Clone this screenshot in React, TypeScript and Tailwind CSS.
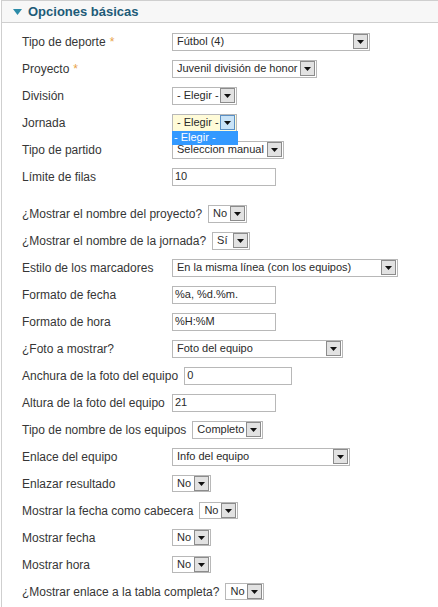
import React from "react";

const font = { fontFamily: '"Liberation Sans", Arial, sans-serif' };

function Arrow({ active }: { active?: boolean }) {
  return (
    <span
      className={`ml-auto mr-[1px] flex h-[15px] w-[15px] shrink-0 items-center justify-center border ${
        active ? "border-[#5a8fc4] bg-[#c9e3f7]" : "border-[#8c8c8c] bg-[#e2e2e2]"
      }`}
    >
      <svg width="7" height="4" viewBox="0 0 7 4">
        <path d="M0 0h7L3.5 4z" fill="#111" />
      </svg>
    </span>
  );
}

function Select({
  value,
  w,
  h = "h-[18px]",
  active,
}: {
  value: string;
  w: string;
  h?: string;
  active?: boolean;
}) {
  return (
    <div
      className={`flex shrink-0 items-center border border-[#b8b8b8] ${h} ${w} ${
        active ? "bg-[#fffbd8]" : "bg-white"
      }`}
    >
      <span className="whitespace-nowrap pl-[4px] text-[11px] leading-none text-[#2a2a2a]">
        {value}
      </span>
      <Arrow active={active} />
    </div>
  );
}

function Input({ value, w }: { value: string; w: string }) {
  return (
    <div
      className={`flex h-[18px] shrink-0 items-center border border-[#b8b8b8] bg-white pl-[2px] text-[11px] leading-none text-[#2a2a2a] ${w}`}
    >
      {value}
    </div>
  );
}

function Row({
  label,
  req,
  children,
}: {
  label: string;
  req?: boolean;
  children: React.ReactNode;
}) {
  return (
    <div className="relative flex h-[27px] items-center">
      <span className="min-w-[150px] whitespace-nowrap pr-[6px] text-[12px] text-[#363636]">
        {label}
        {req && <span className="ml-[4px] text-[#e8a34a]">*</span>}
      </span>
      {children}
    </div>
  );
}

export default function App() {
  return (
    <div className="min-h-[607px] w-[438px] bg-white" style={font}>
      <div className="ml-[1px] min-h-[607px] border-l border-[#cfcfcf]">
        <div className="flex h-[23px] items-center border-y border-[#cfcfcf] bg-[#f7f7f7]">
          <svg width="9" height="6" viewBox="0 0 9 6" className="ml-[11px]">
            <path d="M0 0h9L4.5 6z" fill="#2b8ba8" />
          </svg>
          <span className="ml-[6px] text-[13px] font-bold text-[#1d5b78]">
            Opciones básicas
          </span>
        </div>

        <div className="pl-[20px] pt-[5px]">
          <Row label="Tipo de deporte" req>
            <Select value="Fútbol (4)" w="w-[198px]" />
          </Row>
          <Row label="Proyecto" req>
            <Select value="Juvenil división de honor" w="w-[145px]" />
          </Row>
          <Row label="División">
            <Select value="- Elegir -" w="w-[65px]" />
          </Row>
          <Row label="Jornada">
            <div className="relative">
              <Select value="- Elegir -" w="w-[65px]" active />
              <div className="absolute left-0 top-[17px] z-10 flex h-[14px] w-[66px] items-center bg-[#3399ff] pl-[2px] text-[11px] leading-none text-white">
                - Elegir -
              </div>
            </div>
          </Row>
          <Row label="Tipo de partido">
            <Select value="Seleccion manual" w="w-[112px]" />
          </Row>
          <Row label="Límite de filas">
            <Input value="10" w="w-[104px]" />
          </Row>

          <div className="h-[10px]" />

          <Row label="¿Mostrar el nombre del proyecto?">
            <Select value="No" w="w-[39px]" />
          </Row>
          <Row label="¿Mostrar el nombre de la jornada?">
            <Select value="Sí" w="w-[38px]" />
          </Row>
          <Row label="Estilo de los marcadores">
            <Select value="En la misma línea (con los equipos)" w="w-[226px]" />
          </Row>
          <Row label="Formato de fecha">
            <Input value="%a, %d.%m." w="w-[104px]" />
          </Row>
          <Row label="Formato de hora">
            <Input value="%H:%M" w="w-[104px]" />
          </Row>
          <Row label="¿Foto a mostrar?">
            <Select value="Foto del equipo" w="w-[171px]" />
          </Row>
          <Row label="Anchura de la foto del equipo">
            <Input value="0" w="w-[108px]" />
          </Row>
          <Row label="Altura de la foto del equipo">
            <Input value="21" w="w-[104px]" />
          </Row>
          <Row label="Tipo de nombre de los equipos">
            <Select value="Completo" w="w-[71px]" />
          </Row>
          <Row label="Enlace del equipo">
            <Select value="Info del equipo" w="w-[178px]" />
          </Row>
          <Row label="Enlazar resultado">
            <Select value="No" w="w-[39px]" h="h-[17px]" />
          </Row>
          <Row label="Mostrar la fecha como cabecera">
            <Select value="No" w="w-[39px]" h="h-[17px]" />
          </Row>
          <Row label="Mostrar fecha">
            <Select value="No" w="w-[39px]" h="h-[17px]" />
          </Row>
          <Row label="Mostrar hora">
            <Select value="No" w="w-[39px]" h="h-[17px]" />
          </Row>
          <Row label="¿Mostrar enlace a la tabla completa?">
            <Select value="No" w="w-[39px]" h="h-[17px]" />
          </Row>
        </div>
      </div>
    </div>
  );
}
